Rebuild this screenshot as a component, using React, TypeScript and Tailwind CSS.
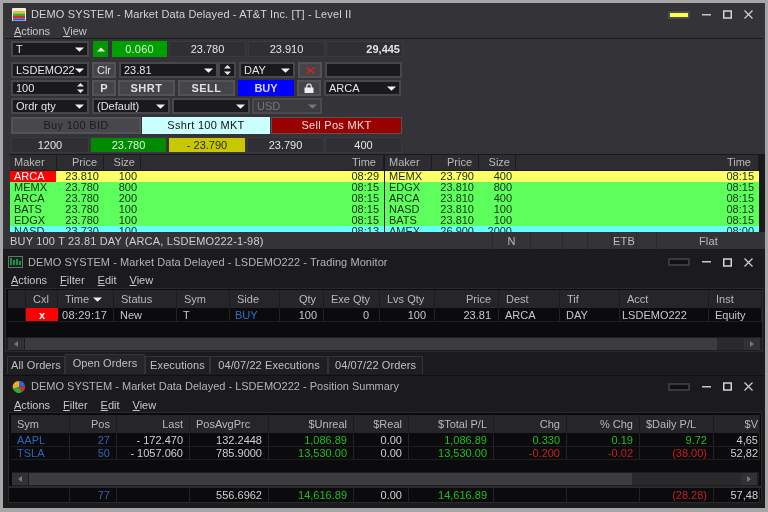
import React from "react";

const Caret = ({ c = "#f2f2f2" }: { c?: string }) => (
  <svg width="9" height="5" viewBox="0 0 9 5" className="shrink-0"><path d="M0 .5H9L4.500 4.800Z" fill={c} /></svg>
);
const Spin = () => (
  <svg width="7" height="12" viewBox="0 0 7 12" className="shrink-0"><path d="M0 4.500H7L3.500 1ZM0 7.500H7L3.500 11Z" fill="#e8e8e8" /></svg>
);

const Drop = ({ w, text = "", spin = false, dim = false }: { w: string; text?: string; spin?: boolean; dim?: boolean }) => (
  <div className={`${w} h-[16px] flex items-center justify-between pl-[3px] pr-[3px] border-2 shrink-0 ${dim ? "border-[#4a4a4f] bg-[#3b3b40] text-[#77777b]" : "border-[#47474c] bg-[#1a1a1c] text-[#e4e4e4]"}`}>
    <span className="overflow-hidden whitespace-nowrap leading-[12px]">{text}</span>
    {spin ? <Spin /> : <Caret c={dim ? "#77777b" : "#f2f2f2"} />}
  </div>
);
const Btn = ({ w, children, cls = "" }: { w: string; children?: React.ReactNode; cls?: string }) => (
  <div className={`${w} h-[16px] flex items-center justify-center border-2 border-[#525257] bg-[#454549] text-[#e0e0e0] font-bold shrink-0 ${cls}`}>{children}</div>
);
const Cell = ({ w, children, cls = "" }: { w: string; children?: React.ReactNode; cls?: string }) => (
  <div className={`${w} flex items-center justify-center border border-[#3a3a3e] bg-[#303034] text-[#e4e4e4] shrink-0 ${cls}`}>{children}</div>
);

const Title = ({ icon, text, light, accent, tr, iw, ipr }: { icon: React.ReactNode; text: string; light?: boolean; accent: string; tr: string; iw: string; ipr: string }) => (
  <div className="h-[19px] flex items-center shrink-0">
    <div className={`${iw} ${ipr} flex justify-end shrink-0`}>{icon}</div>
    <span className={`${tr} whitespace-nowrap ${light ? "text-[#d4d4d4]" : "text-[#b4b4b4]"}`}>{text}</span>
    <div className="ml-auto flex items-center gap-[12px] pr-[12px]">
      <div className={`w-[22px] h-[8px] border-2 rounded-[1px] ${accent}`} />
      <svg width="9" height="2" viewBox="0 0 9 2"><rect width="9" height="1.500" fill="#c8c8c8" /></svg>
      <svg width="9" height="9" viewBox="0 0 9 9"><rect x=".75" y="1" width="7.500" height="7" fill="none" stroke="#d4d4d4" strokeWidth="1.500" /></svg>
      <svg width="9" height="9" viewBox="0 0 9 9"><path d="M.5.500L8.500 8.500M8.500.500L.5 8.500" stroke="#d0d0d0" strokeWidth="1.200" /></svg>
    </div>
  </div>
);

const Menu = ({ items, pl, shift = "" }: { items: string[]; pl: string; shift?: string }) => (
  <div className={`h-[16px] flex items-center gap-[13px] shrink-0 ${pl} ${shift} text-[#c8c8c8]`}>
    {items.map((m) => (
      <span key={m}><span className="underline">{m[0]}</span>{m.slice(1)}</span>
    ))}
  </div>
);

const H = ({ w, r, children, px = "px-[7px]" }: { w: string; r?: boolean; children?: React.ReactNode; px?: string }) => (
  <div className={`${w} shrink-0 flex items-center h-full border-r border-[#1c1c1f] ${px} text-[#b9b9bb] whitespace-nowrap ${r ? "justify-end" : ""}`}>{children}</div>
);

const Book = ({ rows, first }: { rows: [string, string, string, string][]; first?: boolean }) => (
  <div className={`w-[374px] h-full flex flex-col overflow-hidden shrink-0 ${first ? "" : "ml-px"}`}>
    <div className="h-[15px] flex bg-[#2d2d31] shrink-0 mb-px">
      <H w="w-[47px]" px="px-[4px]">Maker</H><H w="w-[47px]" r px="px-[6px]">Price</H><H w="w-[37px]" r px="px-[5px]">Size</H><H w="flex-1" r>Time</H>
    </div>
    {rows.map((r, i) => (
      <div key={i} className={`h-[11px] shrink-0 flex leading-[11px] text-[#142a14] ${i === 0 ? "bg-[#ffff66]" : i === 5 ? "bg-[#66ffff]" : "bg-[#5cff5c]"}`}>
        <div className={`w-[46px] pl-[4px] shrink-0 ${first && i === 0 ? "bg-[#ff0000] text-white" : ""}`}>{r[0]}</div>
        <div className="w-[43px] text-right shrink-0">{r[1]}</div>
        <div className="w-[38px] text-right shrink-0">{r[2]}</div>
        <div className="flex-1 text-right pr-[5px]">{r[3]}</div>
      </div>
    ))}
  </div>
);

const Scroll = ({ thumb, pl }: { thumb: string; pl: string }) => (
  <div className={`h-[14px] flex items-center shrink-0 ${pl} bg-[#1e1e21] pr-[2px]`}>
    <div className="w-[16px] h-[12px] bg-[#323236] flex items-center justify-center shrink-0">
      <svg width="4" height="6" viewBox="0 0 4 6"><path d="M4 0V6L0 3Z" fill="#77777b" /></svg>
    </div>
    <div className="flex-1 h-[12px] bg-[#2a2a2d] ml-px">
      <div className={`${thumb} h-full bg-[#3c3c40]`} />
    </div>
    <div className="w-[16px] h-[12px] bg-[#323236] flex items-center justify-center shrink-0">
      <svg width="4" height="6" viewBox="0 0 4 6"><path d="M0 0V6L4 3Z" fill="#77777b" /></svg>
    </div>
  </div>
);

const monitorCols: [string, string, boolean, string, string][] = [
  ["w-[18px]", "", false, "", ""],
  ["w-[32px]", "Cxl", false, "", ""],
  ["w-[56px]", "Time", false, "08:29:17", "pl-[4px] tracking-[0.3px]"],
  ["w-[63px]", "Status", false, "New", ""],
  ["w-[53px]", "Sym", false, "T", ""],
  ["w-[50px]", "Side", false, "BUY", "pl-[5px]"],
  ["w-[44px]", "Qty", true, "100", ""],
  ["w-[56px]", "Exe Qty", false, "0", "pr-[10px]"],
  ["w-[55px]", "Lvs Qty", false, "100", "pr-[8px]"],
  ["w-[64px]", "Price", true, "23.81", "pr-[7px]"],
  ["w-[61px]", "Dest", false, "ARCA", ""],
  ["w-[60px]", "Tif", false, "DAY", ""],
  ["w-[89px]", "Acct", false, "LSDEMO222", "pl-[2px]"],
  ["flex-1", "Inst", false, "Equity", ""],
];

type P = { t: string; c?: string };
const posW = ["w-[59px]", "w-[47px]", "w-[73px]", "w-[79px]", "w-[85px]", "w-[55px]", "w-[85px]", "w-[73px]", "w-[73px]", "w-[74px]", "flex-1"];
const posHead = ["Sym", "Pos", "Last", "PosAvgPrc", "$Unreal", "$Real", "$Total P/L", "Chg", "% Chg", "$Daily P/L", "$V"];
const B = "text-[#2f63b8]";
const G = "text-[#1fbf1f]";
const R = "text-[#c42020]";
const W = "text-[#d0d0d0]";
const posRows: P[][] = [
  [{ t: "AAPL", c: B }, { t: "27", c: B }, { t: "- 172.470", c: W }, { t: "132.2448", c: W }, { t: "1,086.89", c: G }, { t: "0.00", c: W }, { t: "1,086.89", c: G }, { t: "0.330", c: G }, { t: "0.19", c: G }, { t: "9.72", c: G }, { t: "4,65", c: W }],
  [{ t: "TSLA", c: B }, { t: "50", c: B }, { t: "- 1057.060", c: W }, { t: "785.9000", c: W }, { t: "13,530.00", c: G }, { t: "0.00", c: W }, { t: "13,530.00", c: G }, { t: "-0.200", c: R }, { t: "-0.02", c: R }, { t: "(38.00)", c: R }, { t: "52,82", c: W }],
];
const posFoot: P[] = [{ t: "" }, { t: "77", c: B }, { t: "" }, { t: "556.6962", c: W }, { t: "14,616.89", c: G }, { t: "0.00", c: W }, { t: "14,616.89", c: G }, { t: "" }, { t: "" }, { t: "(28.28)", c: R }, { t: "57,48", c: W }];

const PosRow = ({ cells, cls }: { cells: P[]; cls: string }) => (
  <div className={`flex -mx-px ${cls}`}>
    {cells.map((p, i) => (
      <div key={i} className={`${posW[i]} shrink-0 border-r border-[#232326] whitespace-nowrap overflow-hidden ${i === 0 ? "pl-[6px]" : "text-right pl-[2px] pr-[6px]"} ${i === 10 ? "!pr-[1px]" : ""} ${p.c ?? ""}`}>{p.t}</div>
    ))}
  </div>
);

const tabs: [string, string][] = [
  ["All Orders", "w-[58px]"],
  ["Open Orders", "w-[80px]"],
  ["Executions", "w-[65px]"],
  ["04/07/22 Executions", "w-[118px]"],
  ["04/07/22 Orders", "w-[95px]"],
];

export default function App() {
  return (
    <div className="w-[768px] h-[512px] bg-[#a6a6a6] pt-[3px] pb-[4px] px-[3px] flex flex-col overflow-hidden font-['Liberation_Sans',Arial,sans-serif] text-[11px] leading-[13px] text-[#ddd] blur-[0.3px]">
      {/* Level II */}
      <div className="h-[247px] bg-[#333338] flex flex-col shrink-0 border-b border-[#18181a]">
        <div className="h-[19px] pt-[2px] flex flex-col shrink-0">
          <Title
            light
            iw="w-[28px]"
            ipr="pr-[5px]"
            tr="tracking-[0.13px]"
            accent="bg-[#ffff44] border-[#4c4c50]"
            text="DEMO SYSTEM - Market Data Delayed - AT&T Inc. [T] - Level II"
            icon={
              <svg width="14" height="13" viewBox="0 0 14 13">
                <rect width="14" height="13" rx="1" fill="#f2efe0" />
                <rect x="1" y="3" width="12" height="2.500" fill="#e8c020" />
                <rect x="1" y="5.500" width="12" height="2.500" fill="#2fae3a" />
                <rect x="1" y="8" width="12" height="2.500" fill="#d62c2c" />
                <rect x="1" y="10.500" width="12" height="2" fill="#2b4fd0" />
              </svg>
            }
          />
        </div>
        <Menu items={["Actions", "View"]} pl="pl-[11px]" shift="pt-[2px]" />
        <div className="mx-[2px] h-px bg-[#19191b] shrink-0 mb-[2px]" />
        <div className="pl-[8px] flex flex-col h-[113px] shrink-0">
          <div className="flex h-[16px] shrink-0">
            <Drop w="w-[78px]" text="T" />
            <div className="w-[15px] ml-[4px] h-[16px] flex items-center justify-center bg-[#009900] shrink-0">
              <svg width="8" height="5" viewBox="0 0 8 5"><path d="M0 4.500H8L4 .5Z" fill="#f2f2f2" /></svg>
            </div>
            <div className="w-[55px] ml-[4px] flex items-center justify-center bg-[#00a000] text-[#d8f0d8] tracking-[0.2px] shrink-0">0.060</div>
            <Cell w="w-[77px] ml-[2px]">23.780</Cell>
            <Cell w="w-[77px] ml-[2px]">23.910</Cell>
            <Cell w="w-[77px] ml-[1px] !justify-end pr-[2px] font-bold">29,445</Cell>
          </div>
          <div className="flex h-[16px] mt-[5px] shrink-0">
            <Drop w="w-[78px]" text="LSDEMO222" />
            <Btn w="w-[24px] ml-[3px]"><span className="font-normal">Clr</span></Btn>
            <Drop w="w-[99px] ml-[3px]" text="23.81" />
            <div className="w-[18px] h-[16px] border-2 border-[#47474c] bg-[#1a1a1c] flex items-center justify-center shrink-0"><Spin /></div>
            <Drop w="w-[56px] ml-[3px]" text="DAY" />
            <Btn w="w-[24px] ml-[3px]">
              <svg width="9" height="7" viewBox="0 0 9 7"><path d="M.5.500L8.500 6.500M8.500.500L.5 6.500" stroke="#e02020" strokeWidth="1.500" /></svg>
            </Btn>
            <div className="w-[77px] ml-[3px] border-2 border-[#47474c] bg-[#1a1a1c] shrink-0" />
          </div>
          <div className="flex h-[16px] mt-[2px] shrink-0">
            <Drop w="w-[78px]" text="100" spin />
            <Btn w="w-[24px] ml-[3px]">P</Btn>
            <Btn w="w-[57px] ml-[2px]"><span className="tracking-[0.5px]">SHRT</span></Btn>
            <Btn w="w-[57px] ml-[3px]"><span className="tracking-[0.5px]">SELL</span></Btn>
            <Btn w="w-[56px] ml-[3px]" cls="!bg-[#0000ff] !border-[#0000ff] !text-[#d6d6ff]">BUY</Btn>
            <Btn w="w-[24px] ml-[3px]">
              <svg width="10" height="10" viewBox="0 0 10 10"><path d="M2.800 5V3.200a2.200 2.200 0 0 1 4.400 0V5" fill="none" stroke="#eee" strokeWidth="1.200" /><rect x="0.500" y="4.500" width="9" height="5.500" fill="#eee" /></svg>
            </Btn>
            <Drop w="w-[77px] ml-[3px]" text="ARCA" />
          </div>
          <div className="flex h-[16px] mt-[2px] shrink-0">
            <Drop w="w-[78px]" text="Ordr qty" />
            <Drop w="w-[78px] ml-[3px]" text="(Default)" />
            <Drop w="w-[78px] ml-[2px]" />
            <Drop w="w-[70px] ml-[2px]" text="USD" dim />
          </div>
          <div className="flex h-[17px] mt-[3px] shrink-0 tracking-[0.3px]">
            <div className="w-[130px] flex items-center justify-center bg-[#47474c] border-2 border-[#525257] text-[#1c1c1c]">Buy 100 BID</div>
            <div className="w-[128px] ml-[1px] flex items-center justify-center bg-[#ccffff] text-[#111]">Sshrt 100 MKT</div>
            <div className="w-[131px] ml-[1px] flex items-center justify-center bg-[#990000] border border-[#555] text-[#f0dcdc]">Sell Pos MKT</div>
          </div>
          <div className="flex h-[16px] mt-[3px] shrink-0">
            <Cell w="w-[78px]">1200</Cell>
            <Cell w="w-[77px] ml-px" cls="!bg-[#008a00] !text-[#dff5df]">23.780</Cell>
            <Cell w="w-[78px] ml-px" cls="!bg-[#c8c800] !text-[#2a2a00]">- 23.790</Cell>
            <Cell w="w-[77px] ml-[1px]">23.790</Cell>
            <Cell w="w-[77px] ml-[1px]">400</Cell>
          </div>
        </div>
        <div className="h-[78px] ml-[7px] flex shrink-0 bg-[#19191b] pt-px">
          <Book first rows={[["ARCA", "23.810", "100", "08:29"], ["MEMX", "23.780", "800", "08:15"], ["ARCA", "23.780", "200", "08:15"], ["BATS", "23.780", "100", "08:15"], ["EDGX", "23.780", "100", "08:15"], ["NASD", "23.730", "100", "08:13"]]} />
          <Book rows={[["MEMX", "23.790", "400", "08:15"], ["EDGX", "23.810", "800", "08:15"], ["ARCA", "23.810", "400", "08:15"], ["NASD", "23.810", "100", "08:13"], ["BATS", "23.810", "100", "08:15"], ["AMEX", "26.900", "2000", "08:00"]]} />
        </div>
        <div className="flex-1 flex items-center pl-[7px] pr-[5px] text-[#cfcfcf] tracking-[0.18px] whitespace-nowrap">
          <span>BUY 100 T 23.81 DAY (ARCA, LSDEMO222-1-98)</span>
          <div className="ml-auto flex h-full items-center text-[#bcbcbc]">
            <div className="w-[38px] text-center border-l border-[#2a2a2d] h-full leading-[18px]">N</div>
            <div className="w-[32px] border-l border-[#2a2a2d] h-full" />
            <div className="w-[25px] border-l border-[#2a2a2d] h-full" />
            <div className="w-[24px] border-l border-[#2a2a2d] h-full" />
            <div className="w-[25px] border-l border-[#2a2a2d] h-full leading-[18px] text-center">ETB</div>
            <div className="w-[20px] border-l border-[#2a2a2d] h-full" />
            <div className="w-[104px] border-l border-[#2a2a2d] h-full leading-[18px] text-center">Flat</div>
          </div>
        </div>
      </div>

      {/* Trading Monitor */}
      <div className="h-[126px] bg-[#1b1b1e] flex flex-col shrink-0 border-b border-[#101012] pt-[2px]">
        <div className="h-[20px] flex flex-col justify-center shrink-0">
          <Title
            iw="w-[25px]"
            ipr="pr-[5px]"
            tr="tracking-[0.07px]"
            accent="bg-[#111113] border-[#3a3a3e]"
            text="DEMO SYSTEM - Market Data Delayed - LSDEMO222 - Trading Monitor"
            icon={
              <svg width="15" height="12" viewBox="0 0 15 12">
                <rect width="15" height="12" fill="#6a6f6a" />
                <rect x="1" y="1" width="13" height="10" fill="#0f2a1c" />
                <path d="M3 2V9M6 4V9M9 3V9M12 5V9" stroke="#2fae5a" strokeWidth="1.500" />
              </svg>
            }
          />
        </div>
        <Menu items={["Actions", "Filter", "Edit", "View"]} pl="pl-[8px]" />
        <div className="mx-[2px] border border-[#2a2a2e] bg-[#0b0b0d] h-[64px] flex flex-col shrink-0">
          <div className="h-[18px] mt-px ml-[2px] flex bg-[#26262a] shrink-0">
            {monitorCols.map((c) => (
              <H key={c[1] + c[0]} w={c[0]} r={c[2]}>
                {c[1]}
                {c[1] === "Time" && <span className="ml-[4px]"><Caret /></span>}
              </H>
            ))}
          </div>
          <div className="h-[14px] ml-[2px] flex shrink-0 border-b border-[#1e1e21] text-[#c8c8c8]">
            {monitorCols.map((c, i) =>
              i === 1 ? (
                <div key={i} className="w-[32px] bg-[#ff0000] flex items-center justify-center text-white font-bold shrink-0 leading-[10px]">x</div>
              ) : (
                <div key={i} className={`${c[0]} shrink-0 border-r border-[#232326] px-[6px] whitespace-nowrap leading-[14px] ${c[2] || i === 7 || i === 8 ? "text-right" : ""} ${i === 5 ? "text-[#2f6fc8]" : ""} ${c[4]}`}>{c[3]}</div>
              )
            )}
          </div>
          <div className="flex-1" />
          <Scroll thumb="w-[692px]" pl="pl-[2px]" />
        </div>
        <div className="flex items-end h-[23px] pl-[4px] pb-px shrink-0">
          {tabs.map(([t, w], i) => (
            <div key={t} className={`${w} border-t border-r border-l border-[#333337] tracking-[0.1px] whitespace-nowrap text-[#c0c0c0] flex items-center justify-center ${i === 1 ? "h-[20px] bg-[#26262a] pb-[2px]" : "h-[18px] bg-[#1f1f22]"}`}>{t}</div>
          ))}
        </div>
      </div>

      {/* Position Summary */}
      <div className="flex-1 bg-[#1b1b1e] flex flex-col min-h-0">
        <div className="h-[20px] pt-px flex flex-col shrink-0">
          <Title
            iw="w-[28px]"
            ipr="pr-[5px]"
            tr="tracking-[0px]"
            accent="bg-[#111113] border-[#3a3a3e]"
            text="DEMO SYSTEM - Market Data Delayed - LSDEMO222 - Position Summary"
            icon={
              <svg width="14" height="12" viewBox="0 0 14 12">
                <path d="M7 6L1 8A6 6 0 0 1 7 0Z" fill="#e8b020" />
                <path d="M7 6V0A6 6 0 0 1 13 5Z" fill="#3a62d0" />
                <path d="M7 6L13 5A6 6 0 0 1 10 11Z" fill="#d03030" />
                <path d="M7 6L10 11A6 6 0 0 1 1 8Z" fill="#35a83a" />
              </svg>
            }
          />
        </div>
        <Menu items={["Actions", "Filter", "Edit", "View"]} pl="pl-[11px]" shift="pt-[2px]" />
        <div className="ml-[5px] mr-[3px] pl-[3px] pr-[2px] border border-[#2a2a2e] flex flex-col bg-[#0b0b0d] flex-1 min-h-0">
          <div className="h-[18px] mt-[2px] flex bg-[#26262a] shrink-0 -mx-px">
            {posHead.map((h, i) => (
              <H key={h} w={posW[i]} r={i !== 0 && i !== 3 && i !== 9} px={i === 10 ? "pl-[2px] pr-[1px]" : "px-[6px]"}>{h}</H>
            ))}
          </div>
          <PosRow cells={posRows[0]} cls="h-[14px] leading-[14px] border-b border-[#1e1e21] shrink-0" />
          <PosRow cells={posRows[1]} cls="h-[13px] leading-[13px] border-b border-[#1e1e21] shrink-0" />
          <div className="h-[12px] shrink-0" />
          <Scroll thumb="w-[603px]" pl="pl-[0px]" />
          <div className="h-[2px] bg-[#2a2a2d] -mx-[3px] shrink-0" />
          <PosRow cells={posFoot} cls="h-[15px] leading-[15px] shrink-0" />
        </div>
        <div className="h-[5px] shrink-0" />
      </div>
    </div>
  );
}
